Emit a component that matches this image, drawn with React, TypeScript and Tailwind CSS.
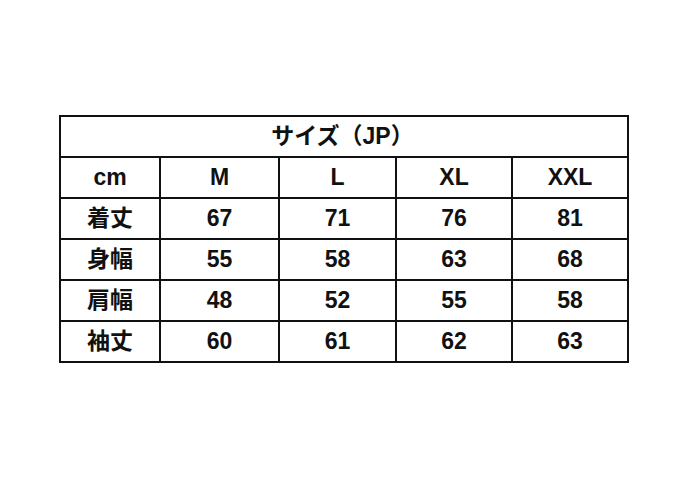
const sizes = ["M", "L", "XL", "XXL"];

const rows: { label: string; values: number[] }[] = [
  { label: "着丈", values: [67, 71, 76, 81] },
  { label: "身幅", values: [55, 58, 63, 68] },
  { label: "肩幅", values: [48, 52, 55, 58] },
  { label: "袖丈", values: [60, 61, 62, 63] },
];

function Cell({ children }: { children: React.ReactNode }) {
  return <div className="bg-white flex items-center justify-center leading-none">{children}</div>;
}

export default function App() {
  return (
    <main
      className="w-[700px] h-[500px] bg-white pt-[115px] pl-[59px] text-[23px] font-bold text-[#111]"
      style={{ fontFamily: '"Liberation Sans", "Noto Sans CJK JP", sans-serif' }}
    >
      <div className="w-[570px] border-2 border-[#111] bg-[#111] grid grid-cols-[98px_117px_115px_114px_114px] auto-rows-[39px] gap-[2px]">
        <div className="col-span-5 bg-white flex items-center justify-center leading-none pr-[3px]">サイズ（JP）</div>
        <Cell>cm</Cell>
        {sizes.map((s) => (
          <Cell key={s}>{s}</Cell>
        ))}
        {rows.map((r) => (
          <>
            <Cell key={r.label}>{r.label}</Cell>
            {r.values.map((v, i) => (
              <Cell key={r.label + i}>{v}</Cell>
            ))}
          </>
        ))}
      </div>
    </main>
  );
}
